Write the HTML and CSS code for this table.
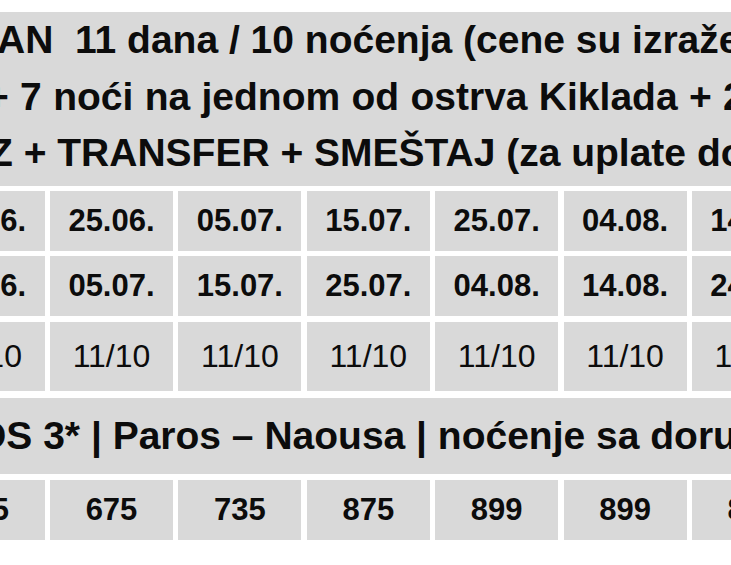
FILE: index.html
```html
<!DOCTYPE html>
<html lang="sr">
<head>
<meta charset="utf-8">
<title>Paros – Naousa</title>
<link rel="stylesheet" href="styles.css">
</head>
<body>
<div class="viewport">
  <div class="table">
    <div class="head">
      <div class="line l1">AN&nbsp; 11 dana / 10 noćenja (cene su izražene u eurima po osobi)</div>
      <div class="line l2">+ 7 noći na jednom od ostrva Kiklada + 2 noći u Atini</div>
      <div class="line l3">Z + TRANSFER + SMEŠTAJ (za uplate do 31.03.)</div>
    </div>
    <div class="row r-date">
      <div class="cell b">15.06.</div>
      <div class="cell b">25.06.</div>
      <div class="cell b">05.07.</div>
      <div class="cell b">15.07.</div>
      <div class="cell b">25.07.</div>
      <div class="cell b">04.08.</div>
      <div class="cell b">14.08.</div>
    </div>
    <div class="row r-date">
      <div class="cell b">25.06.</div>
      <div class="cell b">05.07.</div>
      <div class="cell b">15.07.</div>
      <div class="cell b">25.07.</div>
      <div class="cell b">04.08.</div>
      <div class="cell b">14.08.</div>
      <div class="cell b">24.08.</div>
    </div>
    <div class="row r-nights">
      <div class="cell">11/10</div>
      <div class="cell">11/10</div>
      <div class="cell">11/10</div>
      <div class="cell">11/10</div>
      <div class="cell">11/10</div>
      <div class="cell">11/10</div>
      <div class="cell">11/10</div>
    </div>
    <div class="hotel">
      <div class="line l4">OS 3* | Paros – Naousa | noćenje sa doručkom</div>
    </div>
    <div class="row r-price">
      <div class="cell b">615</div>
      <div class="cell b">675</div>
      <div class="cell b">735</div>
      <div class="cell b">875</div>
      <div class="cell b">899</div>
      <div class="cell b">899</div>
      <div class="cell b">875</div>
    </div>
  </div>
</div>
</body>
</html>
```
FILE: styles.css
```css
html, body {
  margin: 0;
  padding: 0;
  background: #ffffff;
}
body {
  width: 731px;
  height: 565px;
  overflow: hidden;
  font-family: "Liberation Sans", Arial, sans-serif;
  color: #0c0c0c;
}
.viewport {
  width: 731px;
  height: 565px;
  overflow: hidden;
}
.table {
  margin-left: -78.4px;
  padding-top: 12px;
  width: 900px;
  display: flex;
  flex-direction: column;
}
.head {
  background: #d9d9d9;
  height: 174px;
  display: flex;
  flex-direction: column;
}
.line {
  height: 56.5px;
  line-height: 56.5px;
  font-size: 39px;
  font-weight: bold;
  white-space: nowrap;
  padding-left: 78.4px;
}
.l1 { text-indent: -3px; }
.l2 { text-indent: -14px; word-spacing: 0.5px; }
.l3 { text-indent: -11px; }
.row {
  display: grid;
  grid-template-columns: repeat(7, 123px);
  column-gap: 5.4px;
}
.cell {
  background: #d9d9d9;
  display: flex;
  align-items: center;
  justify-content: center;
  font-size: 32px;
  white-space: nowrap;
}
.cell.b { font-weight: bold; font-size: 31px; }
.r-date { height: 60px; margin-top: 5px; }
.r-nights { height: 69px; margin-top: 6px; }
.hotel {
  background: #d9d9d9;
  height: 76px;
  margin-top: 7px;
  display: flex;
  align-items: center;
}
.hotel .line { text-indent: -24px; height: 76px; line-height: 76px; }
.r-price { height: 60px; margin-top: 6px; }
```
